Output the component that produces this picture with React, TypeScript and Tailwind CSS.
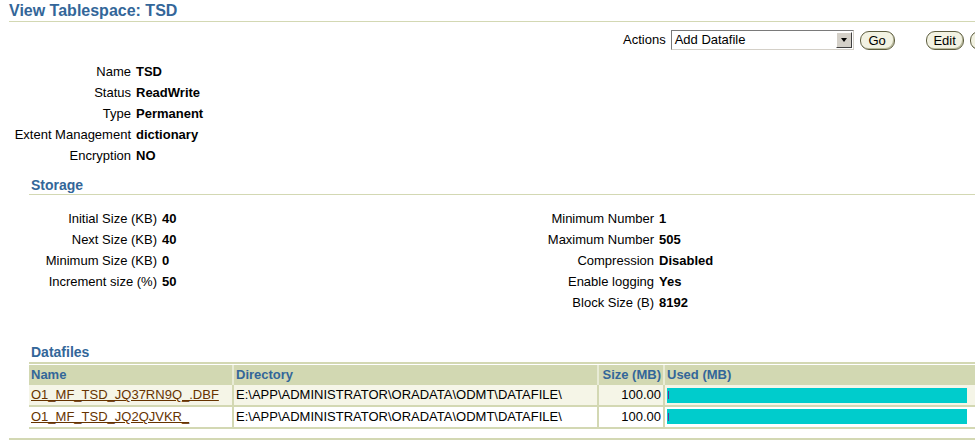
const props = [
  ['Name', 'TSD'],
  ['Status', 'ReadWrite'],
  ['Type', 'Permanent'],
  ['Extent Management', 'dictionary'],
  ['Encryption', 'NO'],
];

const storageLeft = [
  ['Initial Size (KB)', '40'],
  ['Next Size (KB)', '40'],
  ['Minimum Size (KB)', '0'],
  ['Increment size (%)', '50'],
];

const storageRight = [
  ['Minimum Number', '1'],
  ['Maximum Number', '505'],
  ['Compression', 'Disabled'],
  ['Enable logging', 'Yes'],
  ['Block Size (B)', '8192'],
];

const files = [
  { name: 'O1_MF_TSD_JQ37RN9Q_.DBF', dir: 'E:\\APP\\ADMINISTRATOR\\ORADATA\\ODMT\\DATAFILE\\', size: '100.00' },
  { name: 'O1_MF_TSD_JQ2QJVKR_', dir: 'E:\\APP\\ADMINISTRATOR\\ORADATA\\ODMT\\DATAFILE\\', size: '100.00' },
];

function PillButton({ label, className = '' }: { label: string; className?: string }) {
  return (
    <button
      className={`h-[19px] shrink-0 rounded-[9px] border border-[#5e5e40] bg-[#f2f2e2] px-[6px] text-[13px] leading-none text-black shadow-[inset_-1px_-1px_0_#b8b89a] ${className}`}
    >
      {label}
    </button>
  );
}

function PropRow({ label, value, labelW }: { label: string; value: string; labelW: string }) {
  return (
    <div className="flex h-[21px] items-center">
      <div className={`${labelW} shrink-0 text-right text-[13px] text-black`}>{label}</div>
      <div className="pl-[5px] text-[13px] font-bold text-black">{value}</div>
    </div>
  );
}

export default function App() {
  return (
    <div
      className="h-[442px] w-[975px] overflow-hidden bg-white text-black"
      style={{ fontFamily: '"Liberation Sans", Arial, sans-serif' }}
    >
      {/* Title */}
      <div className="ml-[9px] flex h-[22px] items-end border-b border-[#d3d8b3] pb-[2px]">
        <h1 className="text-[16px] font-bold leading-none text-[#336699]">View Tablespace: TSD</h1>
      </div>

      {/* Actions */}
      <div className="mt-[8px] flex h-[20px] items-center overflow-hidden">
        <span className="ml-[623px] shrink-0 text-[13px]">Actions</span>
        <div className="ml-[5px] flex h-[20px] w-[183px] shrink-0 items-center border border-t-[#7a7a7a] border-l-[#7a7a7a] border-r-[#d4d0c8] border-b-[#d4d0c8] bg-white">
          <span className="flex-1 pl-[3px] text-[13px]">Add Datafile</span>
          <div className="mr-[1px] flex h-[16px] w-[16px] items-center justify-center border border-t-white border-l-white border-r-[#404040] border-b-[#404040] bg-[#d4d0c8]">
            <div className="h-0 w-0 border-x-[3.5px] border-t-[4px] border-x-transparent border-t-black" />
          </div>
        </div>
        <PillButton label="Go" className="ml-[6px] w-[35px]" />
        <PillButton label="Edit" className="ml-[31px] w-[38px]" />
        <PillButton label="" className="ml-[6px] w-[30px]" />
      </div>

      {/* General */}
      <div className="mt-[11px]">
        {props.map(([l, v]) => (
          <PropRow key={l} label={l} value={v} labelW="w-[131px]" />
        ))}
      </div>

      {/* Storage */}
      <div className="ml-[29px] mt-[9px] flex h-[20px] items-end border-b border-[#d3d8b3] pb-[2px]">
        <h2 className="pl-[2px] text-[14px] font-bold leading-none text-[#336699]">Storage</h2>
      </div>
      <div className="mt-[13px] flex">
        <div className="w-[497px]">
          {storageLeft.map(([l, v]) => (
            <PropRow key={l} label={l} value={v} labelW="w-[157px]" />
          ))}
        </div>
        <div>
          {storageRight.map(([l, v]) => (
            <PropRow key={l} label={l} value={v} labelW="w-[157px]" />
          ))}
        </div>
      </div>

      {/* Datafiles */}
      <div className="ml-[29px] mt-[32px]">
        <h2 className="pl-[2px] text-[14px] font-bold leading-none text-[#336699]">Datafiles</h2>
        <div className="mt-[3px] border-t-2 border-[#d3d8b3] pt-px">
          <table className="w-[946px] table-fixed border-collapse text-[13px]">
            <colgroup>
              <col className="w-[204px]" />
              <col className="w-[365px]" />
              <col className="w-[66px]" />
              <col />
            </colgroup>
            <thead>
              <tr className="h-[20px] bg-[#d2d8b2]">
                <th className="border-r-2 border-[#e8ebd6] px-[2px] text-left font-bold text-[#336699]">Name</th>
                <th className="border-r-2 border-[#e8ebd6] px-[2px] text-left font-bold text-[#336699]">Directory</th>
                <th className="border-r-2 border-[#e8ebd6] px-[2px] text-right font-bold text-[#336699]">Size (MB)</th>
                <th className="px-[2px] text-left font-bold text-[#336699]">Used (MB)</th>
              </tr>
            </thead>
            <tbody>
              {files.map((f, i) => (
                <tr
                  key={f.name}
                  className={`h-[21px] border-b-2 border-[#d3d8b3] ${i === 0 ? 'bg-[#f5f5e7]' : 'bg-white'}`}
                >
                  <td className="border-r-2 border-[#d3d8b3] px-[2px]">
                    <a className="text-[#663300] underline" href="#">
                      {f.name}
                    </a>
                  </td>
                  <td className="border-r-2 border-[#d3d8b3] px-[2px]">{f.dir}</td>
                  <td className="border-r-2 border-[#d3d8b3] px-[2px] text-right">{f.size}</td>
                  <td className="pl-[2px]">
                    <div className="flex h-[15px] w-[300px] items-center bg-[#00cccc]">
                      <div className="ml-[1px] h-[8px] w-px bg-[#663399]" />
                    </div>
                  </td>
                </tr>
              ))}
            </tbody>
          </table>
        </div>
      </div>
      <div className="ml-[9px] mt-[9px] border-t-2 border-[#d3d8b3]" />
    </div>
  );
}
